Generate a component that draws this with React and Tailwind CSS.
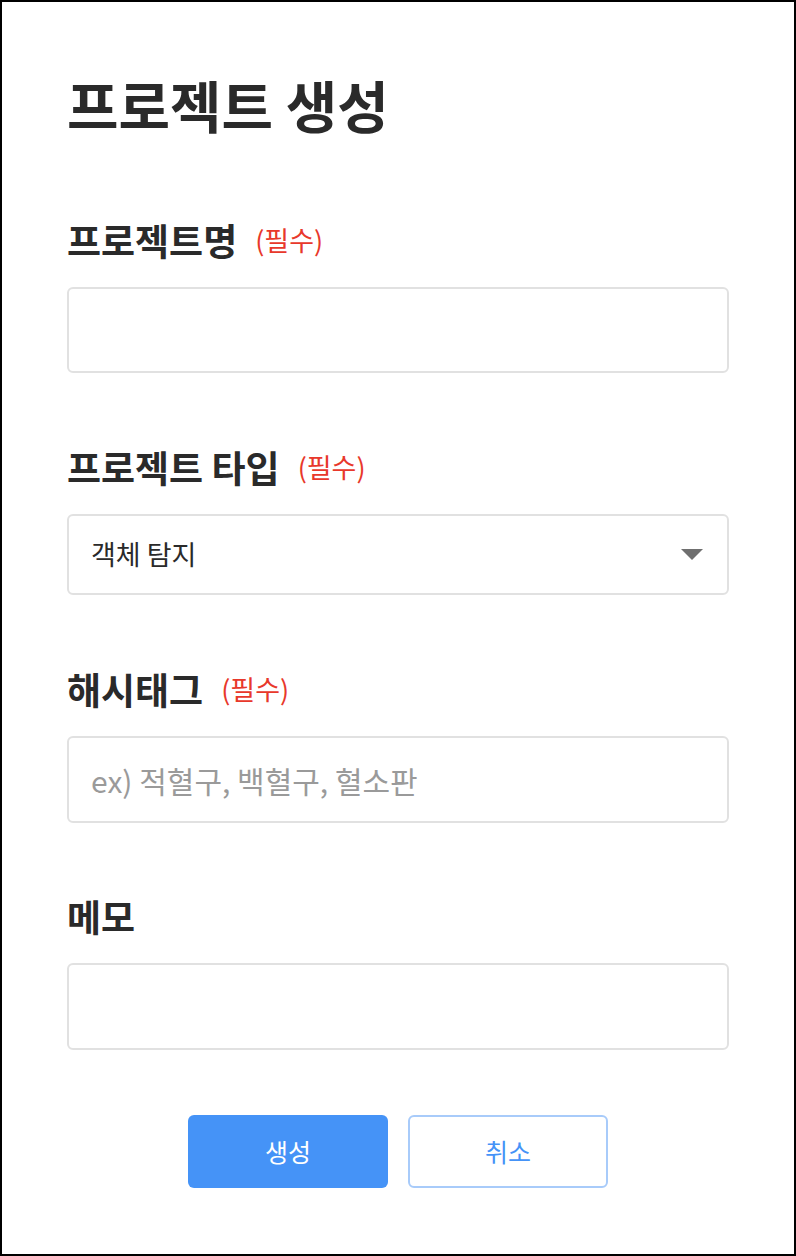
const FONT = { fontFamily: '"Noto Sans CJK KR", "Noto Sans", sans-serif' };

const Label = ({ text, required }) => (
  <div className="flex items-center h-10 mb-[27px]">
    <span className="text-[37px] font-bold text-[#2a2a2a] leading-10">{text}</span>
    {required && <span className="ml-[18px] text-[27px] text-[#e8382b] leading-10">(필수)</span>}
  </div>
);

export default function App() {
  return (
    <div style={FONT} className="w-[796px] h-[1256px] border-2 border-black bg-white px-[65px] pt-[72px] box-border">
      <h1 className="text-[56px] font-bold text-[#2a2a2a] leading-[60px] mb-[86px]">프로젝트 생성</h1>

      <Label text="프로젝트명" required />
      <input className="w-full h-[86px] border-2 border-[#e1e1e1] rounded-md outline-none px-6 text-[27px]" />

      <div className="mt-[74px]">
        <Label text="프로젝트 타입" required />
      </div>
      <div className="w-full h-[81px] border-2 border-[#e1e1e1] rounded-md flex items-center justify-between pl-[22px] pr-[24px]">
        <span className="text-[27px] text-[#2a2a2a]">객체 탐지</span>
        <svg width="22" height="12" viewBox="0 0 22 12">
          <path d="M0 0h22L11 11z" fill="#6f6f6f" />
        </svg>
      </div>

      <div className="mt-[74px]">
        <Label text="해시태그" required />
      </div>
      <input
        placeholder="ex) 적혈구, 백혈구, 혈소판"
        className="w-full h-[87px] border-2 border-[#e1e1e1] rounded-md outline-none px-[22px] text-[30px] placeholder:text-[#9a9a9a]"
      />

      <div className="mt-[73px]">
        <Label text="메모" />
      </div>
      <input className="w-full h-[87px] border-2 border-[#e1e1e1] rounded-md outline-none px-6 text-[27px]" />

      <div className="flex justify-center gap-5 mt-[65px]">
        <button className="w-[200px] h-[73px] rounded-md bg-[#4593f7] text-white text-[25px]">생성</button>
        <button className="w-[200px] h-[73px] rounded-md border-2 border-[#a8cbfa] bg-white text-[#4593f7] text-[25px]">취소</button>
      </div>
    </div>
  );
}
